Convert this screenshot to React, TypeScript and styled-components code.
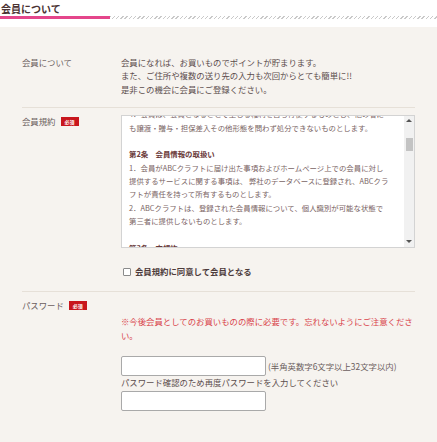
import React, { useLayoutEffect, useRef } from "react";
import styled, { createGlobalStyle } from "styled-components";

const GlobalStyle = createGlobalStyle`
  html, body { margin: 0; padding: 0; background: #fff; }
  body { font-family: "Noto Sans CJK JP", "Noto Sans", sans-serif; }
  * { box-sizing: border-box; }
`;

const Page = styled.div`
  width: 100%;
`;

const TitleBar = styled.header`
  padding-top: 2px;
`;

const Title = styled.h2`
  margin: 0;
  padding-left: 1px;
  font-size: 10px;
  line-height: 14px;
  font-weight: 700;
  color: #4b3333;
`;

const Rule = styled.div`
  display: flex;
  height: 3px;
`;

const RuleAccent = styled.div`
  width: 110px;
  background: #e4468b;
`;

const RuleHatch = styled.div`
  flex: 1;
  background: repeating-linear-gradient(135deg, #c9c9c9 0 1px, transparent 1px 3px);
`;

const Panel = styled.section`
  margin-top: 8px;
  background: #f6f3ef;
  padding: 0 22px 40px;
`;

const Row = styled.div<{ $pad: string; $last?: boolean }>`
  display: grid;
  grid-template-columns: 99px 294px;
  padding: ${(p) => p.$pad};
  border-bottom: ${(p) => (p.$last ? "none" : "1px solid #e6e0d8")};
`;

const Label = styled.div`
  display: flex;
  align-items: center;
  height: 13.33px;
  font-size: 8.4px;
  line-height: 13.33px;
  color: #6b5e5e;
  white-space: nowrap;
`;

const Badge = styled.span`
  display: inline-flex;
  align-items: center;
  justify-content: center;
  width: 18px;
  height: 9px;
  margin-left: 5px;
  background: #c8161d;
  color: #fff;
  font-size: 5px;
  line-height: 9px;
  font-weight: 700;
`;

const Body = styled.div`
  font-size: 8.4px;
  line-height: 13.33px;
  color: #5c4d4d;
`;

const TermsBox = styled.div`
  display: flex;
  height: 133px;
  border: 1px solid #d3d3d3;
  background: #fff;
`;

const TermsScroll = styled.div`
  flex: 1;
  min-width: 0;
  overflow: hidden;
  padding: 0 4px 0 7px;
  font-size: 7.4px;
  line-height: 13.33px;
  color: #7a6464;
`;

const ScrollBar = styled.div`
  width: 10px;
  display: flex;
  flex-direction: column;
  background: #f1f1f1;
`;

const ScrollButton = styled.div<{ $down?: boolean }>`
  height: 10px;
  display: flex;
  justify-content: center;
  align-items: center;
`;

const Arrow = styled.span<{ $down?: boolean }>`
  width: 0;
  height: 0;
  border-left: 3px solid transparent;
  border-right: 3px solid transparent;
  ${(p) => (p.$down ? "border-top: 3px solid #555;" : "border-bottom: 3px solid #555;")}
`;

const ScrollTrack = styled.div`
  flex: 1;
`;

const Thumb = styled.div`
  height: 13px;
  margin: 12px 1px 0 2px;
  background: #c3c3c3;
`;

const TermLine = styled.div<{ $head?: boolean }>`
  min-height: 13.33px;
  white-space: nowrap;
  font-weight: ${(p) => (p.$head ? 700 : 400)};
  color: ${(p) => (p.$head ? "#6a3a3a" : "#7a6464")};
`;

const AgreeRow = styled.label`
  display: flex;
  align-items: center;
  gap: 4px;
  margin-top: 17px;
  font-size: 8.4px;
  line-height: 13.33px;
  font-weight: 700;
  color: #4d3b3b;
`;

const Check = styled.input`
  appearance: none;
  width: 8px;
  height: 8px;
  margin: 0 0 0 2px;
  border: 1px solid #8a8a8a;
  border-radius: 1px;
  background: #fff;
`;

const Note = styled.p`
  margin: 15px -4px 0 0;
  font-size: 8.4px;
  line-height: 14px;
  color: #d9434b;
`;

const InputLine = styled.div<{ $mt: number }>`
  display: flex;
  align-items: center;
  margin-top: ${(p) => p.$mt}px;
`;

const TextInput = styled.input`
  width: 145px;
  height: 20px;
  margin: 0;
  padding: 0 4px;
  border: 1px solid #a9a9a9;
  border-radius: 2px;
  background: #fff;
`;

const Hint = styled.span`
  margin-left: 2px;
  font-size: 8.4px;
  line-height: 13.33px;
  color: #6b5e5e;
  white-space: nowrap;
`;

type Term = { t: string; h?: boolean };

const terms: Term[] = [
  { t: "第1条　会員", h: true },
  { t: "1．「会員」とは、本規約に同意の上、当サイト所定の入会申込みを行" },
  { t: "い、ABCクラフトが入会を承認した個人をいいます。" },
  { t: "2．会員は、入会申込みの際に登録した情報に変更が生じた場合には、" },
  { t: "速やかに所定の方法により変更の届出を行うものとします。" },
  { t: "3．会員は、会員資格を第三者に利用させたり、貸与、譲渡、名義変更、" },
  { t: "売買等をしてはならないものとします。" },
  { t: "4．会員は、会員となることで生じる権利を自ら行使するものとし、他の者に" },
  { t: "も譲渡・贈与・担保差入その他形態を問わず処分できないものとします。" },
  { t: "" },
  { t: "第2条　会員情報の取扱い", h: true },
  { t: "1．会員がABCクラフトに届け出た事項およびホームページ上での会員に対し" },
  { t: "提供するサービスに関する事項は、 弊社のデータベースに登録され、ABCクラ" },
  { t: "フトが責任を持って所有するものとします。" },
  { t: "2．ABCクラフトは、登録された会員情報について、個人識別が可能な状態で" },
  { t: "第三者に提供しないものとします。" },
  { t: "" },
  { t: "第3条　本規約", h: true },
  { t: "1．本規約は、ABCクラフトが提供する会員サービスの利用に関する一切の" },
  { t: "事項に適用されるものとします。" },
  { t: "2．ABCクラフトは、会員の承諾を得ることなく本規約を変更できるものと" },
  { t: "し、変更後の規約はホームページ上に掲載した時点で効力を生じます。" },
  { t: "" },
  { t: "第4条　ポイント", h: true },
  { t: "1．会員は、お買いもの金額に応じて所定のポイントを獲得できます。" },
  { t: "2．獲得したポイントは、次回以降のお買いものの際に1ポイント＝1円" },
  { t: "としてご利用いただけます。" },
  { t: "3．ポイントの有効期限は、最終ご利用日から1年間とします。" },
  { t: "4．ポイントを現金に換金することはできません。" },
  { t: "" },
  { t: "第5条　パスワードの管理", h: true },
  { t: "1．会員は、パスワードを自己の責任において管理するものとします。" },
  { t: "2．パスワードの管理不十分、使用上の過誤、第三者の使用等による損害" },
  { t: "の責任は会員が負うものとし、ABCクラフトは一切の責任を負いません。" },
  { t: "3．会員は、パスワードの盗難や第三者による使用が判明した場合には、" },
  { t: "直ちにABCクラフトに連絡するものとします。" },
  { t: "" },
  { t: "第6条　禁止事項", h: true },
  { t: "会員は、以下の行為を行ってはならないものとします。" },
  { t: "1．他の会員または第三者の権利を侵害する行為" },
  { t: "2．虚偽の情報を登録する行為" },
  { t: "3．公序良俗に反する行為" },
  { t: "4．ABCクラフトの運営を妨害する行為" },
  { t: "5．その他、ABCクラフトが不適切と判断する行為" },
  { t: "" },
  { t: "第7条　退会", h: true },
  { t: "1．会員が退会を希望する場合には、所定の方法により届け出るものとし" },
  { t: "ます。" },
  { t: "2．退会時に保有しているポイントは、すべて失効するものとします。" },
  { t: "" },
  { t: "第8条　会員資格の取消し", h: true },
  { t: "ABCクラフトは、会員が次の各号のいずれかに該当する場合、事前の通知" },
  { t: "なく会員資格を取り消すことができるものとします。" },
  { t: "1．本規約に違反した場合" },
  { t: "2．登録情報に虚偽があった場合" },
  { t: "3．その他、会員として不適切であるとABCクラフトが判断した場合" },
  { t: "" },
  { t: "第9条　免責事項", h: true },
  { t: "ABCクラフトは、通信回線やコンピュータ等の障害によるシステムの中断・" },
  { t: "遅滞・中止・データの消失等により生じた損害について、一切の責任を" },
  { t: "負わないものとします。" },
  { t: "" },
  { t: "第10条　準拠法および管轄裁判所", h: true },
  { t: "本規約の解釈および適用は日本法に準拠するものとし、本規約に関する" },
  { t: "紛争については、ABCクラフトの所在地を管轄する地方裁判所を第一審の" },
  { t: "専属的合意管轄裁判所とします。" },
  { t: "" },
  { t: "附則", h: true },
  { t: "本規約は、2015年4月1日から施行します。" },
];

export default function App() {
  const boxRef = useRef<HTMLDivElement>(null);
  useLayoutEffect(() => {
    if (boxRef.current) boxRef.current.scrollTop = 102;
  }, []);

  return (
    <Page>
      <GlobalStyle />
      <TitleBar>
        <Title>会員について</Title>
        <Rule>
          <RuleAccent />
          <RuleHatch />
        </Rule>
      </TitleBar>
      <Panel>
        <Row $pad="29px 0 11px">
          <Label>会員について</Label>
          <Body>
            会員になれば、お買いものでポイントが貯まります。
            <br />
            また、ご住所や複数の送り先の入力も次回からとても簡単に!!
            <br />
            是非この機会に会員にご登録ください。
          </Body>
        </Row>
        <Row $pad="7px 0 13px">
          <Label>
            会員規約<Badge>必須</Badge>
          </Label>
          <div>
            <TermsBox>
              <TermsScroll ref={boxRef}>
                {terms.map((l, i) => (
                  <TermLine key={i} $head={l.h}>
                    {l.t}
                  </TermLine>
                ))}
              </TermsScroll>
              <ScrollBar>
                <ScrollButton>
                  <Arrow />
                </ScrollButton>
                <ScrollTrack>
                  <Thumb />
                </ScrollTrack>
                <ScrollButton>
                  <Arrow $down />
                </ScrollButton>
              </ScrollBar>
            </TermsBox>
            <AgreeRow>
              <Check type="checkbox" />
              会員規約に同意して会員となる
            </AgreeRow>
          </div>
        </Row>
        <Row $pad="7px 0 0" $last>
          <Label>
            パスワード<Badge>必須</Badge>
          </Label>
          <div>
            <Note>※今後会員としてのお買いものの際に必要です。忘れないようにご注意ください。</Note>
            <InputLine $mt={14}>
              <TextInput type="password" />
              <Hint>(半角英数字6文字以上32文字以内)</Hint>
            </InputLine>
            <Body>パスワード確認のため再度パスワードを入力してください</Body>
            <InputLine $mt={1}>
              <TextInput type="password" />
            </InputLine>
          </div>
        </Row>
      </Panel>
    </Page>
  );
}
